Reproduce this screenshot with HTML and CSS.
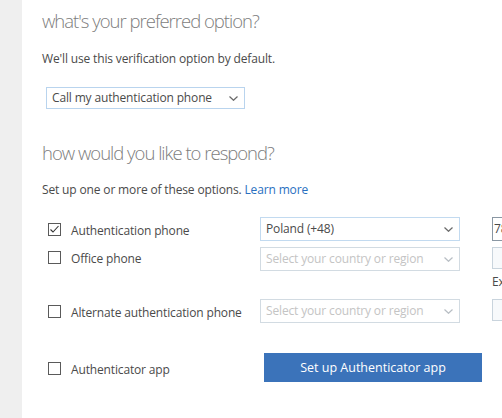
FILE: index.html
```html
<!DOCTYPE html>
<html lang="en">
<head>
<meta charset="utf-8">
<title>Additional security verification</title>
<link rel="stylesheet" href="styles.css">
</head>
<body>
<div class="page">
  <aside class="rail"></aside>
  <main class="content">
    <h2 class="heading">what's your preferred option?</h2>
    <p class="text">We'll use this verification option by default.</p>
    <div class="select select-pref">
      <span>Call my authentication phone</span>
      <svg class="chev" width="9" height="5" viewBox="0 0 9 5"><polyline points="0.5,0.5 4.5,4.3 8.5,0.5" fill="none" stroke="currentColor" stroke-width="1.2"/></svg>
    </div>

    <h2 class="heading heading-2">how would you like to respond?</h2>
    <p class="text text-2">Set up one or more of these options. <a class="link" href="#">Learn more</a></p>

    <div class="options">
      <div class="opt">
        <label class="check"><span class="box"><svg width="11" height="11" viewBox="0 0 11 11"><polyline points="1.5,5.5 4,8 9.5,2" fill="none" stroke="#333" stroke-width="1.1"/></svg></span><span class="lbl">Authentication phone</span></label>
        <div class="select"><span>Poland (+48)</span><svg class="chev" width="9" height="5" viewBox="0 0 9 5"><polyline points="0.5,0.5 4.5,4.3 8.5,0.5" fill="none" stroke="currentColor" stroke-width="1.2"/></svg></div>
        <div class="field"><div class="input input-active">78</div></div>
      </div>
      <div class="opt opt-office">
        <label class="check check-tight"><span class="box"></span><span class="lbl">Office phone</span></label>
        <div class="select select-empty"><span>Select your country or region</span><svg class="chev" width="9" height="5" viewBox="0 0 9 5"><polyline points="0.5,0.5 4.5,4.3 8.5,0.5" fill="none" stroke="currentColor" stroke-width="1.2"/></svg></div>
        <div class="field"><div class="input"></div><div class="hint">Extension</div></div>
      </div>
      <div class="opt opt-alt">
        <label class="check"><span class="box"></span><span class="lbl">Alternate authentication phone</span></label>
        <div class="select select-empty"><span>Select your country or region</span><svg class="chev" width="9" height="5" viewBox="0 0 9 5"><polyline points="0.5,0.5 4.5,4.3 8.5,0.5" fill="none" stroke="currentColor" stroke-width="1.2"/></svg></div>
        <div class="field"><div class="input"></div></div>
      </div>
      <div class="opt opt-app">
        <label class="check"><span class="box"></span><span class="lbl">Authenticator app</span></label>
        <button class="btn" type="button">Set up Authenticator app</button>
      </div>
    </div>
  </main>
</div>
</body>
</html>
```
FILE: styles.css
```css
html, body {
  margin: 0;
  padding: 0;
  background: #fff;
}
body {
  font-family: "Open Sans", "Noto Sans", "Liberation Sans", sans-serif;
  font-size: 12px;
  line-height: 16px;
  letter-spacing: -0.15px;
  color: #4a4a4a;
  overflow: hidden;
}
.page {
  display: flex;
  min-height: 418px;
}
.rail {
  width: 22px;
  flex: none;
  background: #efefef;
}
.content {
  flex: 1;
  padding: 8px 0 0 20px;
  min-width: 0;
}
.heading {
  margin: 0;
  font-size: 18.5px;
  line-height: 26px;
  font-weight: 300;
  letter-spacing: -1px;
  color: #7d7d7d;
  white-space: nowrap;
}
.heading-2 {
  margin-top: 31px;
}
.text {
  margin: 17px 0 0;
  white-space: nowrap;
}
.text-2 {
  margin-top: 16px;
}
.link {
  color: #2a6fbf;
  text-decoration: none;
}
.select {
  box-sizing: border-box;
  display: flex;
  align-items: center;
  justify-content: space-between;
  width: 200px;
  height: 24px;
  padding: 0 6px 0 5px;
  border: 1px solid #c2daf0;
  color: #4a4a4a;
  white-space: nowrap;
}
.select-pref {
  width: 199px;
  height: 22px;
  margin: 20px 0 0 4px;
  border-color: #b9d4ee;
}
.chev {
  color: #6a6a6a;
  flex: none;
}
.select-empty {
  border-color: #d2dbe2;
  color: #c4c4c4;
}
.select-empty .chev {
  color: #b8bec4;
}
.options {
  margin-top: 19px;
  display: flex;
  flex-direction: column;
}
.opt {
  display: grid;
  grid-template-columns: 218px 200px 32px 1fr;
  align-items: start;
}
.opt-office {
  margin-top: 6px;
}
.opt-alt {
  margin-top: 9px;
}
.opt-app {
  margin-top: 30px;
  grid-template-columns: 218px 222px;
  align-items: center;
}
.check {
  display: flex;
  align-items: center;
  gap: 10px;
  height: 24px;
  padding-left: 6px;
  white-space: nowrap;
}
.lbl {
  padding-top: 3px;
}
.check-tight {
  height: 20px;
}
.opt-app .check {
  margin-top: 1px;
}
.box {
  box-sizing: border-box;
  width: 13px;
  height: 13px;
  border: 1px solid #5a5a5a;
  background: #fff;
  display: flex;
  align-items: center;
  justify-content: center;
  flex: none;
}
.field {
  grid-column: 4;
  display: flex;
  flex-direction: column;
  overflow: hidden;
}
.input {
  box-sizing: border-box;
  height: 22px;
  width: 60px;
  border: 1px solid #c9d4dd;
  background: #f7f9fb;
  padding: 0 1px;
  color: #4a4a4a;
  line-height: 20px;
}
.input-active {
  height: 24px;
  border-color: #8a97a3;
  background: #fff;
  line-height: 22px;
}
.hint {
  margin-top: 5px;
  white-space: nowrap;
}
.btn {
  margin-left: 4px;
  width: 218px;
  height: 29px;
  border: 0;
  padding: 0;
  background: #3b73ba;
  color: #fff;
  font-family: inherit;
  font-size: 12.5px;
  letter-spacing: 0;
  cursor: pointer;
}
```
